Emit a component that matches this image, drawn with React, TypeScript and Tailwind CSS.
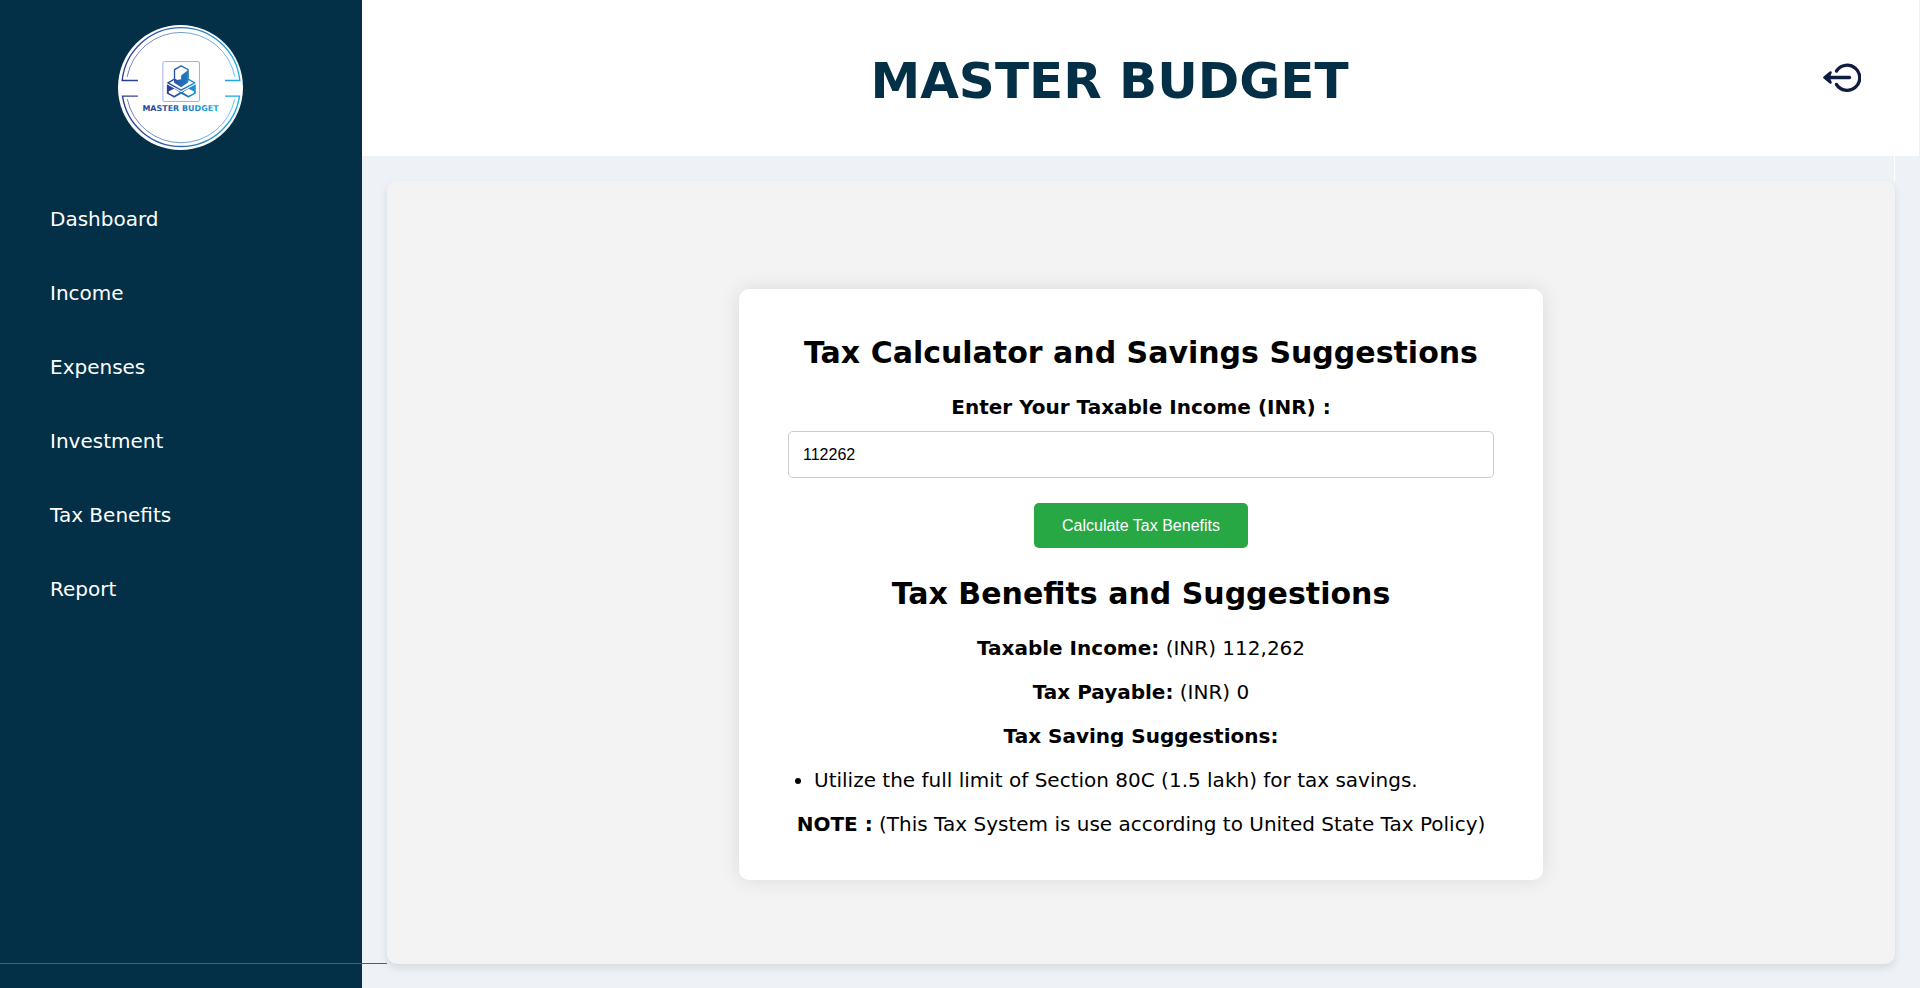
import { useState } from "react";

const navItems = ["Dashboard", "Income", "Expenses", "Investment", "Tax Benefits", "Report"];

function Logo() {
  return (
    <svg viewBox="53 44 376 376" className="h-[125px] w-[125px]" role="img" aria-label="Master Budget logo">
      <defs>
        <linearGradient id="ring" gradientUnits="userSpaceOnUse" x1="64" y1="0" x2="421" y2="0">
          <stop offset="0" stopColor="#2b3990" />
          <stop offset="0.5" stopColor="#2a6cb4" />
          <stop offset="1" stopColor="#1cade4" />
        </linearGradient>
        <linearGradient id="word" gradientUnits="userSpaceOnUse" x1="126" y1="0" x2="357" y2="0">
          <stop offset="0" stopColor="#2b3990" />
          <stop offset="1" stopColor="#1cade4" />
        </linearGradient>
        <linearGradient id="mark" gradientUnits="userSpaceOnUse" x1="200" y1="0" x2="288" y2="0">
          <stop offset="0" stopColor="#2b3990" />
          <stop offset="1" stopColor="#1b9ad8" />
        </linearGradient>
      </defs>
      <circle cx="241" cy="232" r="188" fill="#fff" />
      <g fill="none" stroke="url(#ring)">
        <path strokeWidth="4" d="M113 211H65.500A178 178 0 0 1 419.500 211H375M113 258H66.500A178 178 0 0 0 418.500 258H375" />
        <path strokeWidth="2" d="M80.500 200A165 165 0 0 1 404.500 200M81 267A165 165 0 0 0 404 267" />
      </g>
      <rect x="188" y="154" width="110" height="120" rx="4" fill="#fff" stroke="#a3abf5" strokeWidth="3" />
      <path fill="url(#mark)" d="M200 222L243 246L287 222V250L265 263L243 251L222 263L200 250Z" />
      <path fill="#fff" d="M205 244L222 236L239 246L222 257L207 249ZM282 244L265 236L248 246L265 257L280 249Z" />
      <path fill="#fff" stroke="url(#mark)" strokeWidth="4" strokeLinejoin="round" d="M203 218L223 207L243 219L264 207L284 218L243 240Z" />
      <path fill="url(#mark)" d="M221 207L243 197L266 207L264 217L243 231L222 218Z" />
      <path fill="#fff" stroke="url(#mark)" strokeWidth="4" strokeLinejoin="round" d="M223 178L243 167L264 178V207L243 219L223 207Z" />
      <path fill="url(#mark)" d="M264 179V209L243 221L226 210L243 207V196Z" />
      <text x="241" y="302" textAnchor="middle" fontFamily="'DejaVu Sans', sans-serif" fontWeight="700" fontSize="24" fill="url(#word)">
        MASTER BUDGET
      </text>
    </svg>
  );
}

function LogoutIcon() {
  return (
    <svg viewBox="0 0 38 30" className="h-[30px] w-[38px]" fill="none" stroke="#0f1c3f" strokeWidth="3.300" strokeLinecap="round" strokeLinejoin="round" aria-hidden="true">
      <path d="M13.500 8A12.600 12.600 0 1 1 13.500 21.500" />
      <path d="M26.500 14.500H3" />
      <path d="M7.500 9.500L1.500 14.500L7.500 19.500L5.500 14.500Z" fill="#0f1c3f" strokeWidth="2.500" />
    </svg>
  );
}

export default function App() {
  const [income, setIncome] = useState("112262");

  return (
    <div className="relative flex min-h-screen bg-[#eef2f7] font-['DejaVu_Sans',Verdana,sans-serif] text-xl leading-6 text-black">
      <aside className="flex w-[362px] shrink-0 flex-col bg-[#033047] pt-[25px]">
        <div className="flex justify-center pr-0.5">
          <Logo />
        </div>
        <nav className="mt-[57px] flex flex-col items-start gap-[50px] pl-[50px] text-white">
          {navItems.map((item) => (
            <a key={item} href="#">
              {item}
            </a>
          ))}
        </nav>
      </aside>

      <div className="flex min-w-0 flex-1 flex-col">
        <header className="mr-px flex h-[156px] shrink-0 items-center bg-white pr-12 pl-11">
          <h1 className="flex-1 pt-1.5 text-center text-[50px] leading-[60px] font-bold text-[#033047]">MASTER BUDGET</h1>
          <button type="button" aria-label="Log out" className="flex w-[58px] justify-center">
            <LogoutIcon />
          </button>
        </header>
        <div className="mr-[25px] h-[25px] shrink-0 border-r border-white" />
        <main className="mr-[25px] mb-6 ml-[25px] flex flex-1 items-center justify-center rounded-[10px] bg-[#f3f3f3] pt-6 shadow-[0_4px_8px_rgba(0,0,0,0.1)]">
          <section className="my-10 flex w-[804px] flex-col items-center rounded-[10px] bg-white px-[49px] pt-[46px] pb-11 shadow-[0_0_20px_rgba(0,0,0,0.1)]">
            <h2 className="text-[30px] leading-9 font-bold">Tax Calculator and Savings Suggestions</h2>
            <label htmlFor="income" className="mt-6 font-bold">
              Enter Your Taxable Income (INR) :
            </label>
            <input
              id="income"
              type="text"
              value={income}
              onChange={(e) => setIncome(e.target.value)}
              className="mt-3 h-[47px] w-full rounded-[5px] border border-[#ccc] px-3.5 font-['Liberation_Sans',Arial,sans-serif] text-base"
            />
            <button type="button" className="mt-[25px] h-[45px] rounded-[5px] bg-[#28a745] px-7 font-['Liberation_Sans',Arial,sans-serif] text-base text-white">
              Calculate Tax Benefits
            </button>
            <h2 className="mt-7 text-[30px] leading-9 font-bold">Tax Benefits and Suggestions</h2>
            <p className="mt-6">
              <strong>Taxable Income:</strong> (INR) 112,262
            </p>
            <p className="mt-5">
              <strong>Tax Payable:</strong> (INR) 0
            </p>
            <p className="mt-5 font-bold">Tax Saving Suggestions:</p>
            <ul className="mt-5 list-disc self-start pl-[26px]">
              <li>Utilize the full limit of Section 80C (1.5 lakh) for tax savings.</li>
            </ul>
            <p className="mt-5 whitespace-nowrap">
              <strong>NOTE :</strong> (This Tax System is use according to United State Tax Policy)
            </p>
          </section>
        </main>
      </div>
      <div className="absolute bottom-6 left-0 h-px w-[387px] bg-[#4a6078]" />
    </div>
  );
}
